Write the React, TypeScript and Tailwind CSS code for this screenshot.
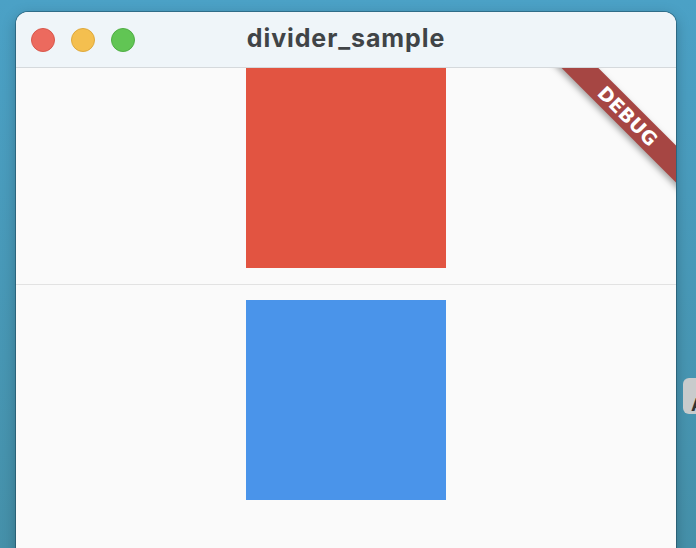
export default function App() {
  return (
    <div className="relative w-[696px] h-[548px] overflow-hidden bg-gradient-to-b from-[#4ba1c6] to-[#4590a9]">
      {/* partially visible element at right edge */}
      <div className="absolute left-[683px] top-[378px] w-[24px] h-[36px] rounded-[6px] bg-[#c9cbcc] overflow-hidden">
        <span className="absolute left-[8px] top-[18px] text-[18px] font-bold leading-none text-[#333] [font-family:Inter,sans-serif]">A</span>
      </div>
      <div className="ml-[16px] mt-[12px] w-[660px] h-[560px] rounded-t-[12px] overflow-hidden bg-[#fafafa] shadow-[0_0_0_1px_rgba(20,60,80,0.45),0_4px_14px_rgba(0,0,0,0.25)] flex flex-col">
        <div className="relative h-[56px] shrink-0 bg-[#eff5f9] border-b border-[#d5d9dc] flex items-center justify-center">
          <div className="absolute left-[15px] top-[16px] flex gap-[16px]">
            <div className="w-[24px] h-[24px] rounded-full bg-[#ec6a5e] border border-[#d9574b]" />
            <div className="w-[24px] h-[24px] rounded-full bg-[#f4bf4f] border border-[#dfa93c]" />
            <div className="w-[24px] h-[24px] rounded-full bg-[#61c554] border border-[#4fae44]" />
          </div>
          <span className="text-[25px] font-bold text-[#404447] [font-family:Inter,sans-serif] tracking-[0.9px] -mt-[1px]">divider_sample</span>
        </div>
        <div className="relative flex-1 overflow-hidden flex flex-col items-center">
          <div className="w-[200px] h-[200px] bg-[#e25441] shrink-0" />
          <div className="w-full h-[32px] flex items-center shrink-0">
            <div className="w-full h-[1px] bg-[#e2e2e2]" />
          </div>
          <div className="w-[200px] h-[200px] bg-[#4a94ea] shrink-0" />
          {/* DEBUG banner */}
          <div className="absolute left-[512px] top-[35px] w-[200px] h-[26px] rotate-45 bg-[#a64643] shadow-[0_3px_6px_rgba(0,0,0,0.35)] flex items-center justify-center">
            <span className="text-white font-bold text-[19px] tracking-[0.3px] leading-none [font-family:'DejaVu_Sans',sans-serif]">DEBUG</span>
          </div>
        </div>
      </div>
    </div>
  );
}
